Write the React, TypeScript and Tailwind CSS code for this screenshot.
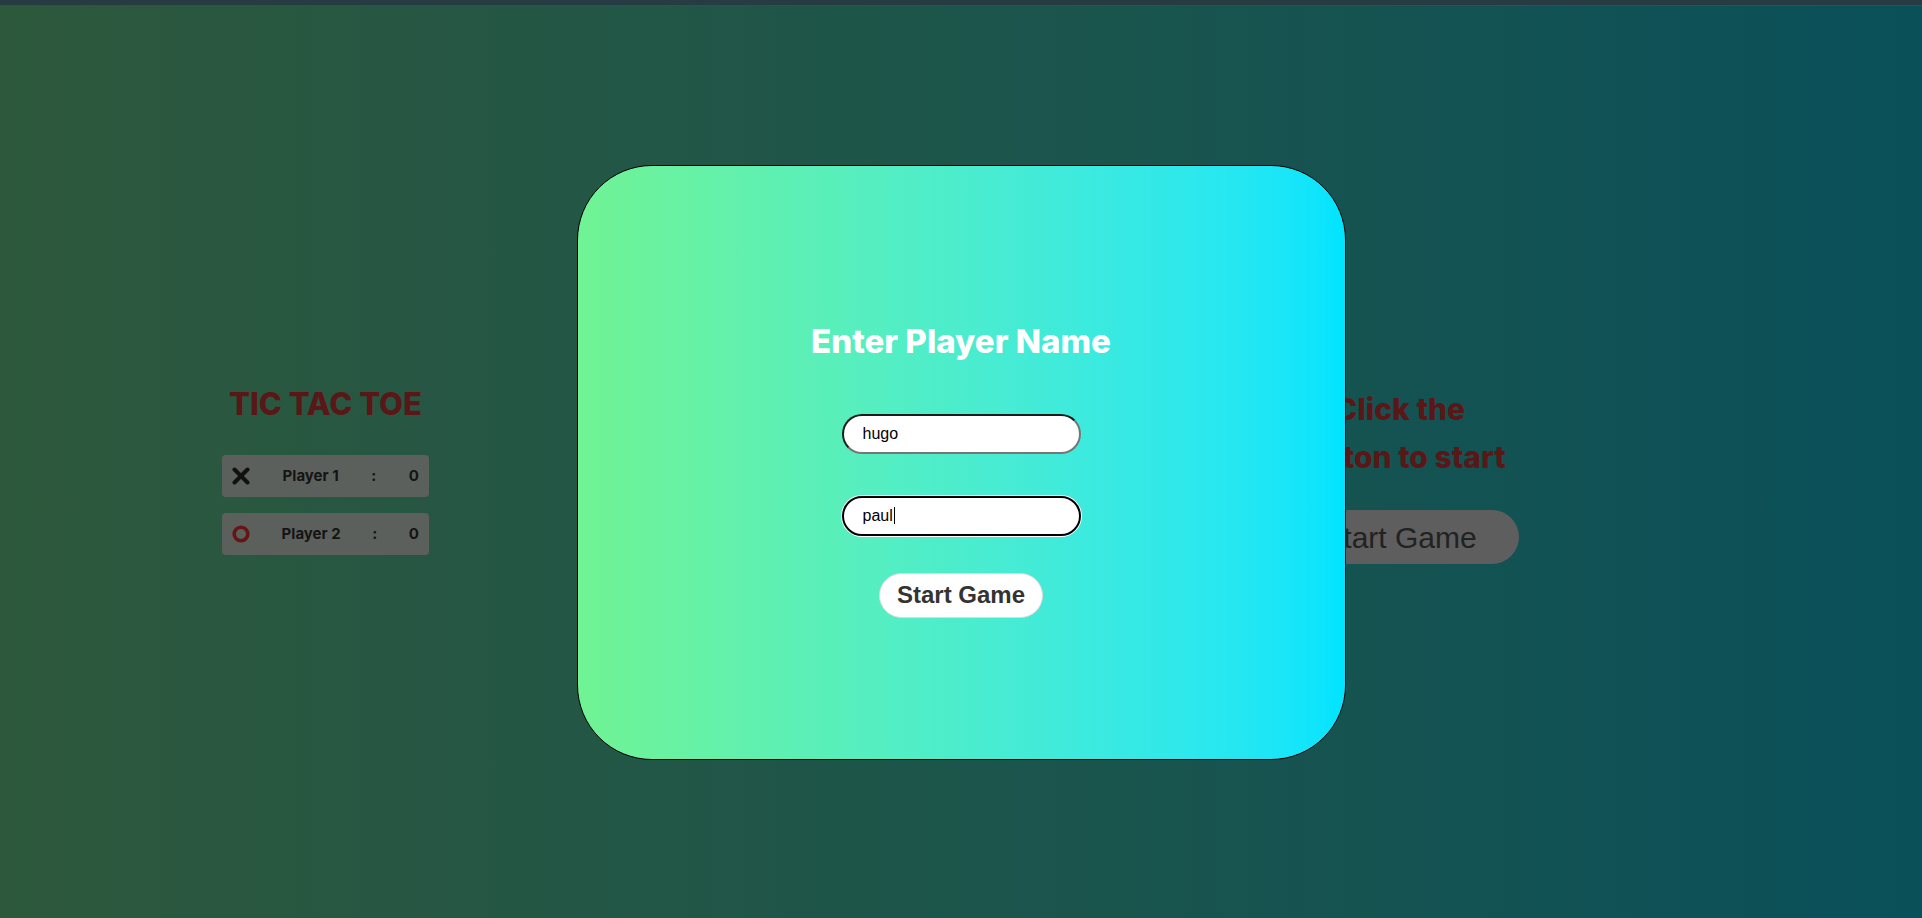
import React from "react";

type ScoreRowProps = {
  mark: "x" | "o";
  name: string;
  score: number;
};

function XMark() {
  return (
    <svg width="18" height="18" viewBox="0 0 18 18" className="shrink-0">
      <path d="M2.5 2.5 L15.5 15.5 M15.5 2.5 L2.5 15.5" stroke="#111" strokeWidth="4" strokeLinecap="round" />
    </svg>
  );
}

function OMark() {
  return (
    <svg width="18" height="18" viewBox="0 0 18 18" className="shrink-0">
      <circle cx="9" cy="9" r="6.8" fill="none" stroke="#661414" strokeWidth="3.6" />
    </svg>
  );
}

function ScoreRow({ mark, name, score }: ScoreRowProps) {
  return (
    <div className="flex items-center justify-between w-[207px] h-[42px] px-[10px] rounded-[4px] bg-[#5c605c] text-[#141414] text-[15px] font-bold">
      {mark === "x" ? <XMark /> : <OMark />}
      <span>{name}</span>
      <span>:</span>
      <span>{score}</span>
    </div>
  );
}

export default function App() {
  return (
    <div className="w-full h-[918px] flex flex-col overflow-hidden font-['Inter','Liberation_Sans',sans-serif]">
      <div className="h-[6px] shrink-0 bg-[#273b43] border-b border-[#3b4b4d]" />
      <main className="relative h-[912px] bg-linear-to-r from-[#2d583c] via-[#1c554b] to-[#09505a]">
        <div className="flex items-start pt-[375px]">
          <div className="ml-[222px] w-[207px] flex flex-col items-center">
            <h1 className="text-[31px] leading-[45px] font-extrabold text-[#5a1717]">TIC TAC TOE</h1>
            <div className="mt-[29px] flex flex-col gap-[16px]">
              <ScoreRow mark="x" name="Player 1" score={0} />
              <ScoreRow mark="o" name="Player 2" score={0} />
            </div>
          </div>

          <div className="ml-[821px] w-[300px] mt-[4px] flex flex-col items-center">
            <p className="text-[30px] leading-[48px] font-extrabold text-[#5a1717] text-center">
              Click the
              <br />
              button to start
            </p>
            <button className="mt-[29px] h-[54px] px-[42px] rounded-full bg-[#5e5e5e] text-[30px] text-[#222] font-['Liberation_Sans',Arial,sans-serif]">
              Start Game
            </button>
          </div>
        </div>

        <div className="absolute inset-0 flex items-center justify-center">
          <div className="w-[769px] h-[595px] rounded-[75px] border border-black bg-linear-to-r from-[#70f393] to-[#00e4ff] flex flex-col items-center pt-[151px]">
            <h2 className="text-[33px] leading-[48px] font-extrabold text-white">Enter Player Name</h2>

            <input
              readOnly
              value="hugo"
              className="mt-[49px] w-[239px] h-[40px] rounded-full bg-white border-2 border-t-[#1c1c1c] border-l-[#1c1c1c] border-b-[#767676] border-r-[#767676] pl-[19px] text-[16px] text-black outline-none font-['Liberation_Sans',Arial,sans-serif]"
            />

            <div className="relative mt-[42px]">
              <input
                readOnly
                value="paul"
                className="w-[239px] h-[40px] rounded-full bg-white border-2 border-black ring-1 ring-white pl-[19px] text-[16px] text-black outline-none font-['Liberation_Sans',Arial,sans-serif]"
              />
              <span className="absolute left-[52px] top-[11px] w-px h-[17px] bg-black" />
            </div>

            <button className="mt-[37px] h-[45px] px-[17px] rounded-full bg-white border border-[#dcdcdc] text-[24px] font-bold text-[#333] font-['Liberation_Sans',Arial,sans-serif]">
              Start Game
            </button>
          </div>
        </div>
      </main>
    </div>
  );
}
